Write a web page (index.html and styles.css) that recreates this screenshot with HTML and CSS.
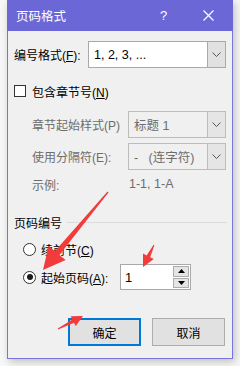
FILE: index.html
```html
<!DOCTYPE html>
<html lang="zh-CN">
<head>
    <meta charset="UTF-8">
    <title>页码格式</title>
    <link rel="stylesheet" href="styles.css">
</head>
<body>
    <div class="dialog">
        <div class="titlebar">
            <span class="title">页码格式</span>
            <span class="help">?</span>
            <span class="close">
                <svg width="11" height="11" viewBox="0 0 11 11"><path d="M0.5 0.5L10.5 10.5M10.5 0.5L0.5 10.5" stroke="#fff" stroke-width="1.2"/></svg>
            </span>
        </div>
        <div class="content">
            <div class="row row-format">
                <span class="label">编号格式(<u>F</u>):</span>
                <div class="select wide">
                    <span class="value">1, 2, 3, ...</span>
                    <span class="drop"><svg width="9" height="5" viewBox="0 0 9 5"><path d="M0.5 0.5L4.5 4.5L8.5 0.5" fill="none" stroke="#555" stroke-width="1"/></svg></span>
                </div>
            </div>

            <div class="row row-check">
                <span class="checkbox"></span>
                <span>包含章节号(<u>N</u>)</span>
            </div>

            <div class="row row-chapter disabled">
                <span class="label sub">章节起始样式(P)</span>
                <div class="select narrow">
                    <span class="value">标题 1</span>
                    <span class="drop"><svg width="9" height="5" viewBox="0 0 9 5"><path d="M0.5 0.5L4.5 4.5L8.5 0.5" fill="none" stroke="#555" stroke-width="1"/></svg></span>
                </div>
            </div>
            <div class="row row-sep disabled">
                <span class="label sub">使用分隔符(E):</span>
                <div class="select narrow">
                    <span class="value">-&nbsp;&nbsp;&nbsp;(连字符)</span>
                    <span class="drop"><svg width="9" height="5" viewBox="0 0 9 5"><path d="M0.5 0.5L4.5 4.5L8.5 0.5" fill="none" stroke="#555" stroke-width="1"/></svg></span>
                </div>
            </div>
            <div class="row row-example disabled">
                <span class="label sub">示例:</span>
                <span class="example">1-1, 1-A</span>
            </div>

            <div class="group-title">
                <span>页码编号</span>
                <span class="line"></span>
            </div>

            <div class="row row-radio">
                <span class="radio"></span>
                <span>续前节(<u>C</u>)</span>
            </div>
            <div class="row row-start">
                <span class="radio checked"></span>
                <span class="start-label">起始页码(<u>A</u>):</span>
                <div class="spin">
                    <span class="spin-value">1</span>
                    <div class="spin-btns">
                        <span class="spin-btn"><svg width="7" height="4" viewBox="0 0 7 4"><path d="M3.5 0L7 4H0Z" fill="#000"/></svg></span>
                        <span class="spin-btn"><svg width="7" height="4" viewBox="0 0 7 4"><path d="M0 0H7L3.5 4Z" fill="#000"/></svg></span>
                    </div>
                </div>
            </div>

            <div class="buttons">
                <button class="btn primary">确定</button>
                <button class="btn">取消</button>
            </div>
        </div>
    </div>

    <!-- red annotation arrows -->
    <svg class="marks" width="240" height="366" viewBox="0 0 240 366">
        <polygon fill="#f23b3b" points="108.5,192.4 59.4,255 65.6,260.1 43,270 48.6,246.1 54.8,251.2 107.5,191.6"/>
        <polygon fill="#f23b3b" points="154.4,245.2 150.2,257.2 153.8,259 143,267 143,253.6 146.6,255.4 153.6,244.8"/>
        <polygon fill="#f23b3b" points="58.2,329.4 74,322.7 75.7,326 83,316 70.7,316.2 72.4,319.5 57.8,328.6"/>
    </svg>
</body>
</html>
```

FILE: styles.css
```css
body {
    margin: 0;
    width: 240px;
    height: 366px;
    background-color: #f7f7f7;
    font-family: "Liberation Sans", "Noto Sans CJK SC", sans-serif;
    font-size: 12px;
    color: #000;
    position: relative;
    overflow: hidden;
}
u {
    text-decoration: underline;
    text-underline-offset: 1px;
}
.dialog {
    margin-left: 7px;
    width: 226px;
    height: 359px;
    box-sizing: border-box;
    border: 1px solid #7875dc;
    border-top: none;
    background-color: #f0f0f0;
    box-shadow: 2px 3px 8px rgba(0, 0, 0, 0.22);
    display: flex;
    flex-direction: column;
}
.titlebar {
    height: 31px;
    margin: 0 -1px;
    background-color: #6b67d6;
    color: #fff;
    display: flex;
    align-items: center;
    padding-left: 9px;
    font-size: 12.5px;
}
.title {
    flex: 1;
}
.help {
    width: 16px;
    font-size: 13px;
    margin-right: 27px;
}
.close {
    width: 30px;
    display: flex;
    align-items: center;
}
.content {
    padding: 0 5px 0 6px;
    display: flex;
    flex-direction: column;
}
.row {
    display: flex;
    align-items: center;
}
.row-format {
    margin-top: 10px;
    height: 27px;
}
.label {
    width: 74px;
    white-space: nowrap;
}
.label.sub {
    width: 96px;
    padding-left: 18px;
}
.select {
    height: 27px;
    box-sizing: border-box;
    border: 1px solid #a9a9a9;
    background-color: #fff;
    display: flex;
    align-items: stretch;
}
.select.wide {
    width: 138px;
}
.select.narrow {
    width: 98px;
}
.select .value {
    flex: 1;
    padding-left: 5px;
    display: flex;
    align-items: center;
    font-size: 12.5px;
    white-space: nowrap;
}
.select .drop {
    width: 17px;
    border-left: 1px solid #a9a9a9;
    background-color: #e1e1e1;
    display: flex;
    align-items: center;
    justify-content: center;
}
.disabled {
    color: #6d6d6d;
}
.disabled .select {
    background-color: #f0f0f0;
    border-color: #bcbcbc;
}
.disabled .select .drop {
    background-color: #e5e5e5;
    border-left-color: #bcbcbc;
}
.row-check {
    margin-top: 17px;
    height: 12px;
    gap: 6px;
}
.checkbox {
    width: 12px;
    height: 12px;
    box-sizing: border-box;
    border: 1px solid #333;
    background-color: #fff;
}
.row-chapter {
    margin-top: 14px;
}
.row-sep {
    margin-top: 5px;
}
.row-example {
    margin-top: 6px;
    height: 16px;
}
.example {
    font-size: 12.5px;
    padding-left: 1px;
}
.group-title {
    margin-top: 22px;
    height: 16px;
    display: flex;
    align-items: center;
    gap: 5px;
}
.group-title .line {
    flex: 1;
    height: 1px;
    background-color: #dcdcdc;
}
.row-radio {
    margin-top: 12px;
    height: 14px;
    padding-left: 9px;
    gap: 5px;
}
.radio {
    width: 13px;
    height: 13px;
    box-sizing: border-box;
    border: 1px solid #333;
    border-radius: 50%;
    background-color: #fff;
    position: relative;
}
.radio.checked::after {
    content: "";
    position: absolute;
    left: 2.5px;
    top: 2.5px;
    width: 6px;
    height: 6px;
    border-radius: 50%;
    background-color: #1a1a1a;
}
.row-start {
    margin-top: 8px;
    height: 26px;
    padding-left: 9px;
    gap: 5px;
}
.start-label {
    width: 74px;
}
.spin {
    width: 71px;
    height: 26px;
    box-sizing: border-box;
    border: 1px solid #a9a9a9;
    background-color: #fff;
    display: flex;
    align-items: stretch;
}
.spin-value {
    flex: 1;
    padding-left: 4px;
    font-size: 13px;
    display: flex;
    align-items: center;
}
.spin-btns {
    width: 16px;
    padding: 1px 1px 1px 0;
    display: flex;
    flex-direction: column;
    gap: 1px;
}
.spin-btn {
    flex: 1;
    border: 1px solid #adadad;
    background-color: #e5e5e5;
    display: flex;
    align-items: center;
    justify-content: center;
}
.buttons {
    margin-top: 28px;
    margin-right: 2px;
    display: flex;
    justify-content: flex-end;
    gap: 11px;
}
.btn {
    width: 73px;
    height: 28px;
    box-sizing: border-box;
    border: 1px solid #adadad;
    background-color: #e1e1e1;
    font-family: "Liberation Sans", "Noto Sans CJK SC", sans-serif;
    font-size: 12px;
    color: #000;
    padding: 0;
}
.btn.primary {
    border: 2px solid #0078d7;
}
.marks {
    position: absolute;
    left: 0;
    top: 0;
    pointer-events: none;
}
```
